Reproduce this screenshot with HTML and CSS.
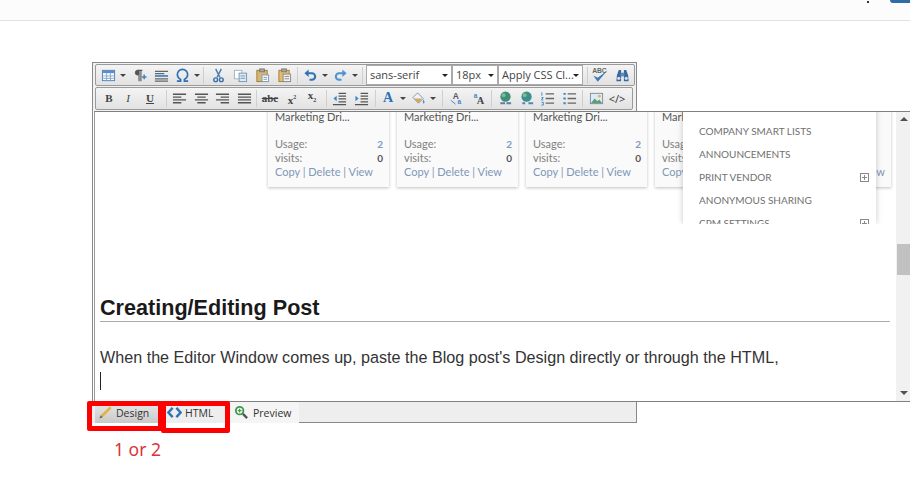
FILE: index.html
```html
<!DOCTYPE html>
<html lang="en">
<head>
<meta charset="utf-8">
<title>Editor</title>
<link rel="stylesheet" href="styles.css">
</head>
<body>
<header class="topbar"><span class="dot"></span><span class="topbtn"></span></header>
<div class="editor">
  <div class="toolbars">
    <div class="row row1">
      <span class="btn"><svg viewBox="0 0 16 16"><rect x="1.5" y="2.5" width="13" height="11" fill="#fff" stroke="#4a7fb5"/><path d="M1.5 2.5h13v3h-13z" fill="#5b8fc7"/><path d="M1.5 8.5h13M1.5 11h13M6 5.5v8M10 5.5v8" stroke="#7fa6cf"/></svg></span>
      <span class="arr"></span>
      <span class="btn g1"><svg viewBox="0 0 16 16"><path d="M6 2.500a2.500 2.500 0 0 0 0 5h1V2.500z" fill="#555" stroke="#555"/><path d="M6 2.500h5M7.500 2.500V14M9.500 2.500V14" fill="none" stroke="#555" stroke-width="1.200"/><path d="M10.500 9.500h5M13 7v5" stroke="#3b87c4" stroke-width="1.600"/></svg></span>
      <span class="btn"><svg viewBox="0 0 16 16"><path d="M1 3.500h14M1 6h10" stroke="#666" stroke-width="1.400"/><path d="M1 8.500h14" stroke="#3b7fc4" stroke-width="1.800"/><path d="M1 11.500h14M1 14h14" stroke="#666" stroke-width="1.400"/></svg></span>
      <span class="btn omega"><svg viewBox="0 0 16 16"><path d="M2 14h4v-1.800C3.500 11 2.500 9 2.500 7A5.500 5.500 0 0 1 13.500 7c0 2-1 4-3.500 5.200V14h4" fill="none" stroke="#2f6fb5" stroke-width="1.700"/></svg></span>
      <span class="arr"></span>
      <span class="sep sep1"></span>
      <span class="btn"><svg viewBox="0 0 16 16"><path d="M5 1l4.500 9M11 1L6.500 10" stroke="#4a7db5" stroke-width="1.500"/><circle cx="5" cy="12.500" r="2" fill="none" stroke="#3a6ea5" stroke-width="1.500"/><circle cx="11" cy="12.500" r="2" fill="none" stroke="#3a6ea5" stroke-width="1.500"/></svg></span>
      <span class="btn"><svg viewBox="0 0 16 16"><rect x="1.500" y="2.500" width="8" height="9" fill="#fff" stroke="#9db4cc"/><rect x="6.500" y="5.500" width="8" height="9" fill="#dfeaf5" stroke="#6f95bb"/><path d="M8 8.500h5M8 11h5" stroke="#6f95bb"/></svg></span>
      <span class="btn"><svg viewBox="0 0 16 16"><rect x="2" y="2.500" width="11" height="12" fill="#d9b66f" stroke="#9c7b3a"/><rect x="5" y="1" width="5" height="3" fill="#aaa" stroke="#777"/><rect x="7.500" y="7.500" width="7" height="7" fill="#fff" stroke="#7d98b3"/><path d="M9 10h4M9 12h4" stroke="#7d98b3"/></svg></span>
      <span class="btn"><svg viewBox="0 0 16 16"><rect x="2" y="2.500" width="11" height="12" fill="#e3bd6b" stroke="#a5813a"/><rect x="5" y="1" width="5" height="3" fill="#aaa" stroke="#777"/><rect x="6.500" y="6.500" width="8" height="8" fill="#f3f3f3" stroke="#888"/><path d="M8 9h5M8 11.500h5" stroke="#888"/></svg></span>
      <span class="sep sep2"></span>
      <span class="btn"><svg viewBox="0 0 16 16"><path d="M4 5.500h5.500a3.500 3.500 0 0 1 0 7H7" fill="none" stroke="#2f73b8" stroke-width="2.200"/><path d="M6 1.500v8L1.500 5.500z" fill="#2f73b8"/></svg></span>
      <span class="arr arr2"></span>
      <span class="btn"><svg viewBox="0 0 16 16"><path d="M12 5.500H6.500a3.500 3.500 0 0 0 0 7H9" fill="none" stroke="#4d94d1" stroke-width="2.200"/><path d="M10 1.500v8l4.500-4z" fill="#4d94d1"/></svg></span>
      <span class="arr arr2"></span>
      <span class="sep sep3"></span>
      <span class="sel s1">sans-serif</span>
      <span class="sel s2">18px</span>
      <span class="sel s3">Apply CSS Cl...</span>
      <span class="sep sep4"></span>
      <span class="btn"><svg class="spell" viewBox="0 0 16 16"><path d="M2 8.500l4 5.500 8.500-10-8.500 6.500z" fill="#3b78b8"/><text x="1" y="6.500" class="abc">ABC</text></svg></span>
      <span class="btn"><svg viewBox="0 0 16 16"><path d="M2 8l2-6h2.500v12H1.500zM14 8l-2-6H9.500v12h5z" fill="#39689c"/><rect x="6" y="5" width="4" height="4" fill="#5c8dbf"/><circle cx="4" cy="11" r="1.700" fill="#cfe0f0"/><circle cx="12" cy="11" r="1.700" fill="#cfe0f0"/></svg></span>
    </div>
    <div class="row row2">
      <span class="fmt b">B</span>
      <span class="fmt i">I</span>
      <span class="fmt u">U</span>
      <span class="sep sep5"></span>
      <span class="btn"><svg viewBox="0 0 16 16"><path d="M1 3.500h14M1 6.500h9M1 9.500h14M1 12.500h9" stroke="#555" stroke-width="1.500"/></svg></span>
      <span class="btn"><svg viewBox="0 0 16 16"><path d="M1 3.500h14M3.500 6.500h9M1 9.500h14M3.500 12.500h9" stroke="#555" stroke-width="1.500"/></svg></span>
      <span class="btn tight"><svg viewBox="0 0 16 16"><path d="M1 3.500h14M6 6.500h9M1 9.500h14M6 12.500h9" stroke="#555" stroke-width="1.500"/></svg></span>
      <span class="btn"><svg viewBox="0 0 16 16"><path d="M1 3.500h14M1 6.500h14M1 9.500h14M1 12.500h14" stroke="#555" stroke-width="1.500"/></svg></span>
      <span class="sep sep6"></span>
      <span class="fmt abc-s">abc</span>
      <span class="fmt sup">x<small>2</small></span>
      <span class="fmt sub">x<small>2</small></span>
      <span class="sep sep7"></span>
      <span class="btn"><svg viewBox="0 0 16 16"><path d="M7 2.500h8M7 5.500h8M7 8.500h8M7 11.500h8M1 14.500h14" stroke="#555" stroke-width="1.300"/><path d="M5 5L1.500 8 5 11z" fill="#3a86c8"/></svg></span>
      <span class="btn"><svg viewBox="0 0 16 16"><path d="M7 2.500h8M7 5.500h8M7 8.500h8M7 11.500h8M1 14.500h14" stroke="#555" stroke-width="1.300"/><path d="M1.500 5L5 8 1.500 11z" fill="#3a86c8"/></svg></span>
      <span class="sep sep8"></span>
      <span class="fmt color">A</span>
      <span class="arr arr3"></span>
      <span class="btn"><svg viewBox="0 0 16 16"><path d="M7 2l6 6-5 5-6-6z" fill="#eef3f8" stroke="#7a93ad"/><path d="M3 8h9l-4 5z" fill="#d9a45b"/><path d="M13 9c1.500 2 2 3 1 4s-2-1-1-4z" fill="#4a90d0"/></svg></span>
      <span class="arr arr3"></span>
      <span class="sep sep9"></span>
      <span class="btn"><svg viewBox="0 0 16 16"><text x="4" y="8" class="mini">A</text><path d="M2 10l5 4" stroke="#3a86c8"/><text x="9" y="14" class="mini2">a</text></svg></span>
      <span class="btn"><svg viewBox="0 0 16 16"><text x="6" y="14" class="mini3">A</text><text x="3" y="7" class="mini2">a</text></svg></span>
      <span class="sep sep10"></span>
      <span class="btn"><svg viewBox="0 0 16 16"><circle cx="8" cy="6" r="5.500" fill="#3f8f7c"/><circle cx="6" cy="4.500" r="2" fill="#7cc08a"/><path d="M2.500 13h5M9 13h5" stroke="#5d7fa3" stroke-width="2"/></svg></span>
      <span class="btn"><svg viewBox="0 0 16 16"><circle cx="7" cy="6" r="5.500" fill="#3f8f8c"/><circle cx="5" cy="4.500" r="2" fill="#7cc08a"/><path d="M2.500 13h3M9 13h5" stroke="#4a86c0" stroke-width="2"/></svg></span>
      <span class="btn lists"><svg viewBox="0 0 16 16"><path d="M6 3h9M6 8h9M6 13h9" stroke="#666" stroke-width="1.400"/><path d="M2 1.500v3.500M1.500 7h2L1.500 9.500h2M1.500 12h2v3h-2" fill="none" stroke="#3a86c8"/></svg></span>
      <span class="btn"><svg viewBox="0 0 16 16"><path d="M6 3h9M6 8h9M6 13h9" stroke="#666" stroke-width="1.400"/><path d="M1.500 3h2.500M1.500 8h2.500M1.500 13h2.500" stroke="#3a86c8" stroke-width="2"/></svg></span>
      <span class="sep sep11"></span>
      <span class="btn"><svg viewBox="0 0 16 16"><rect x="1.500" y="2.500" width="13" height="11" fill="#dcebf7" stroke="#7c8ea0"/><path d="M2 13l4-5 3 3 2-2 3 4z" fill="#5f9c6f"/><circle cx="11" cy="5.500" r="1.500" fill="#e8b64c"/></svg></span>
      <span class="code">&lt;/&gt;</span>
    </div>
  </div>

  <div class="content">
    <div class="doc">
      <div class="shot">
        <div class="cards">
          <article class="card">
            <div class="title">Marketing Dri...</div>
            <div class="stat"><span>Usage:</span><b class="blue">2</b></div>
            <div class="stat"><span>visits:</span><b>0</b></div>
            <div class="links">Copy | Delete | View</div>
          </article>
          <article class="card">
            <div class="title">Marketing Dri...</div>
            <div class="stat"><span>Usage:</span><b class="blue">2</b></div>
            <div class="stat"><span>visits:</span><b>0</b></div>
            <div class="links">Copy | Delete | View</div>
          </article>
          <article class="card">
            <div class="title">Marketing Dri...</div>
            <div class="stat"><span>Usage:</span><b class="blue">2</b></div>
            <div class="stat"><span>visits:</span><b>0</b></div>
            <div class="links">Copy | Delete | View</div>
          </article>
          <article class="card wide">
            <div class="title">Marketing Dri...</div>
            <div class="stat"><span>Usage:</span></div>
            <div class="stat"><span>visits:</span></div>
            <div class="links spread"><span>Copy | Delete</span><span>View</span></div>
          </article>
        </div>
        <nav class="menu">
          <div class="item">SECURITY</div>
          <div class="item">COMPANY SMART LISTS</div>
          <div class="item">ANNOUNCEMENTS</div>
          <div class="item">PRINT VENDOR<i class="plus"></i></div>
          <div class="item">ANONYMOUS SHARING</div>
          <div class="item">CPM SETTINGS<i class="plus"></i></div>
        </nav>
      </div>
      <h2 class="heading">Creating/Editing Post</h2>
      <p class="para">When the Editor Window comes up, paste the Blog post's Design directly or through the HTML,</p>
      <span class="caret"></span>
    </div>
    <div class="scroll">
      <span class="up"></span>
      <span class="thumb"></span>
      <span class="down"></span>
    </div>
  </div>

  <div class="tabs">
    <div class="tab design">
      <svg viewBox="0 0 16 16"><path d="M3 11L12.500 1.500l2 2L5 13z" fill="#e2b341"/><path d="M3 11l2 2-3.500 1.500z" fill="#6b5a3a"/></svg>Design
    </div>
    <div class="tab html">
      <svg viewBox="0 0 16 16"><path d="M6 3L1.500 8 6 13M10 3l4.500 5L10 13" fill="none" stroke="#2d74b5" stroke-width="2.600"/></svg>HTML
    </div>
    <div class="tab preview">
      <svg viewBox="0 0 16 16"><circle cx="6" cy="6" r="4" fill="#fff" stroke="#3f9a4a" stroke-width="2"/><path d="M4 6h4M6 4v4" stroke="#3f9a4a" stroke-width="1.300"/><path d="M9.500 9.500L14 14" stroke="#555" stroke-width="2.500"/></svg>Preview
    </div>
    <div class="tabfill"></div>
    <span class="mark m1"></span>
    <span class="mark m2"></span>
    <span class="note">1 or 2</span>
  </div>
</div>
</body>
</html>
```
FILE: styles.css
```css
* { box-sizing: border-box; }
html, body { margin: 0; padding: 0; }
body { width: 910px; height: 493px; overflow: hidden; background: #fff; font-family: "Liberation Sans", Arial, sans-serif; }

.topbar { position: relative; height: 21px; background: #fcfcfc; border-bottom: 1px solid #e2e2e2; }
.topbar .dot { position: absolute; left: 867px; top: 1px; width: 2px; height: 2px; background: #333; }
.topbar .topbtn { position: absolute; left: 890px; top: 0; width: 20px; height: 3px; background: #2f6da8; border-radius: 0 0 0 3px; }

.editor { position: relative; width: 545px; height: 361px; margin: 41px 0 0 92px; border-left: 1px solid #8a8a8a; border-top: 1px solid #8a8a8a; border-right: 1px solid #8a8a8a; }

.toolbars { height: 48px; background: #f1f1f1; padding: 1px 0 0 2px; display: flex; flex-direction: column; gap: 1px; }
.row { display: flex; align-items: center; height: 22px; width: 538px; background: linear-gradient(#f4f4f4, #e2e2e2); border: 1px solid #9a9a9a; border-radius: 2px; padding-left: 1px; }
.row1 { width: 540px; }
.row2 { height: 23px; padding-left: 2px; padding-bottom: 1px; }
.btn { flex: none; width: 22px; height: 18px; display: flex; align-items: center; justify-content: center; }
.btn svg { width: 15px; height: 15px; }
.btn svg.spell { width: 18px; height: 18px; }
.arr { flex: none; width: 7px; height: 3px; display: flex; justify-content: center; }
.arr::before { content: ""; border: 3px solid transparent; border-top-color: #444; border-bottom: 0; }
.arr2 { width: 8px; }
.g1 { margin-left: 2px; }
.omega { margin-left: -1px; }
.tight { margin-left: -1px; }
.lists { margin-left: -2px; }
.sep { flex: none; width: 1px; height: 17px; background: #cfcfcf; }
.sep1 { margin: 0 3px 0 3px; }
.sep2 { margin: 0 1px 0 2px; }
.sep3 { margin: 0 3px 0 3px; }
.sep4 { margin: 0 1px 0 4px; }
.sep5 { margin: 0 1px 0 5px; }
.sep6 { margin: 0 1px 0 1px; }
.sep7 { margin: 0 1px 0 3px; }
.sep8 { margin: 0 1px 0 3px; }
.sep9 { margin: 0 2px 0 5px; }
.sep10 { margin: 0 2px 0 2px; }
.sep11 { margin: 0 2px 0 2px; }

.sel { flex: none; position: relative; height: 20px; background: #fff; border: 1px solid #aaa; font: 11px/18px "Open Sans", sans-serif; color: #444; padding-left: 3px; white-space: nowrap; }
.sel::after { content: ""; position: absolute; right: 3px; top: 8px; border: 3px solid transparent; border-top-color: #222; border-bottom: 0; }
.s1 { width: 86px; }
.s2 { width: 46px; }
.s3 { width: 85px; }

.fmt { flex: none; width: 22px; text-align: center; font-family: "Liberation Serif", serif; color: #444; font-size: 11px; line-height: 18px; }
.b, .u, .abc-s, .sup, .sub { font-weight: bold; }
.u { text-decoration: underline; }
.i { font-style: italic; margin-left: -3px; }
.abc-s { text-decoration: line-through; width: 24px; }
.sup { margin-left: -1px; }
.sub { margin-left: -2px; }
.sup small { font-size: 6px; vertical-align: super; }
.sub small { font-size: 6px; vertical-align: sub; }
.color { font-weight: bold; color: #2f6fb5; font-size: 14px; }
.arr3 { width: 8px; }
.code { flex: none; width: 20px; font: 11px "Open Sans", sans-serif; color: #333; text-align: center; }
.abc { font: bold 6px "Liberation Sans", sans-serif; fill: #666; }
.mini { font: bold 9px "Liberation Sans", sans-serif; fill: #556; }
.mini2 { font: bold 7px "Liberation Sans", sans-serif; fill: #3a86c8; }
.mini3 { font: bold 11px "Liberation Serif", serif; fill: #444; }

.content { display: flex; width: 817px; height: 291px; margin-left: 1px; background: #fff; border-top: 1px solid #808080; border-bottom: 1px solid #808080; border-left: 1px solid #999; }
.doc { flex: 1; min-width: 0; }
.scroll { flex: none; width: 15px; height: 289px; background: #f1f1f1; position: relative; }
.thumb { position: absolute; left: 1px; right: 0; top: 132px; height: 31px; background: #c1c1c1; }
.up, .down { position: absolute; left: 4px; border: 4px solid transparent; }
.up { top: 5px; border-bottom-color: #505050; border-top: 0; }
.down { bottom: 6px; border-top-color: #505050; border-bottom: 0; }

.shot { position: relative; height: 112px; overflow: hidden; }
.cards { display: flex; gap: 8px; padding-left: 173px; margin-top: -8px; }
.card { flex: none; width: 121px; height: 83px; padding: 6px 6px 0 7px; background: #fafafa; box-shadow: 0 1px 3px rgba(0,0,0,.25); font: 400 11px/14px Lato, sans-serif; color: #808080; }
.card.wide { width: 236px; }
.title { height: 27px; color: #555; }
.stat { display: flex; justify-content: space-between; }
.stat b { font: 700 10px/14px Lato, sans-serif; color: #555; }
.stat b.blue { color: #7f9cc0; }
.links { color: #7f97b8; white-space: nowrap; }
.spread { display: flex; justify-content: space-between; }
.menu { position: absolute; left: 588px; top: -15px; width: 193px; height: 127px; background: #fff; box-shadow: 0 0 6px rgba(0,0,0,.22); padding: 0 16px; font: 400 10px/23px Lato, sans-serif; color: #707070; }
.item { position: relative; height: 23px; }
.plus { position: absolute; right: -9px; top: 7px; width: 9px; height: 9px; border: 1px solid #888; background: linear-gradient(#888,#888) center/5px 1px no-repeat, linear-gradient(#888,#888) center/1px 5px no-repeat; }

.heading { margin: 67px 6px 0 5px; height: 31px; border-bottom: 1px solid #aaa; font: bold 21.600px/34px "Liberation Sans", sans-serif; color: #1a1a1a; }
.para { padding: 0 0 0 5px; margin: 26px 0 0; font: 16.150px/18px "Liberation Sans", sans-serif; color: #333; white-space: nowrap; }
.caret { display: block; width: 1px; height: 18px; margin: 6px 0 0 5px; background: #222; }

.tabs { position: relative; display: flex; height: 21px; margin-left: -1px; width: 545px; background: #eee; border-right: 1px solid #888; font: 10.500px/20px "Open Sans", sans-serif; color: #333; }
.tab { display: flex; align-items: center; gap: 3px; height: 21px; }
.tab svg { width: 15px; height: 15px; flex: none; }
.design { margin-left: 3px; width: 65px; padding-left: 3px; background: linear-gradient(#e9e9e9, #c9c9c9); }
.html { margin-left: 2px; width: 67px; padding-left: 5px; background: #eee; }
.preview { width: 70px; padding-left: 5px; background: #f5f5f5; gap: 4px; }
.tabfill { flex: 1; height: 21px; border-bottom: 1px solid #888; }
.mark { position: absolute; border: 5px solid #f00; border-radius: 2px; }
.m1 { left: -5px; top: -1px; width: 76px; height: 30px; }
.m2 { left: 69px; top: -1px; width: 69px; height: 32px; }
.note { position: absolute; left: 22px; top: 35px; font: 17.500px/24px "Noto Sans", sans-serif; color: #d8353a; white-space: nowrap; }
```
